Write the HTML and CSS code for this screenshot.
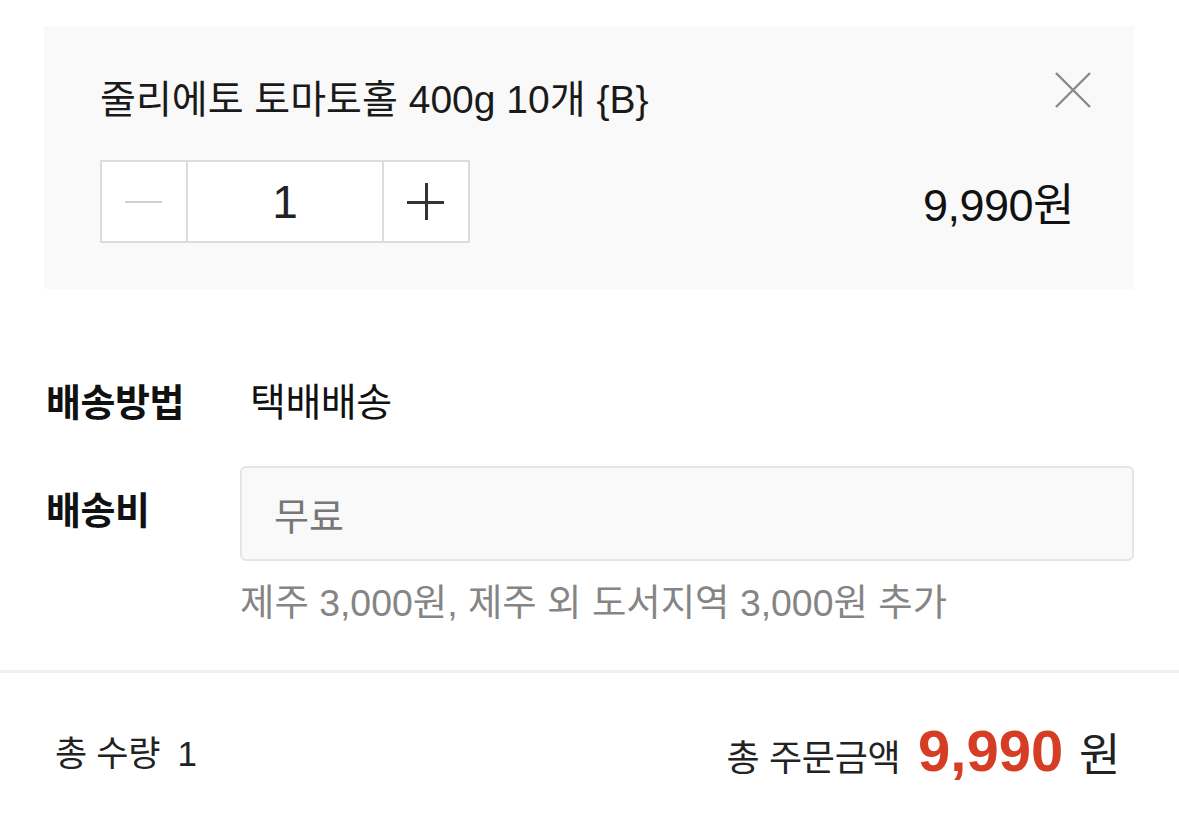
FILE: index.html
```html
<!DOCTYPE html>
<html lang="ko">
<head>
    <meta charset="UTF-8">
    <meta name="viewport" content="width=device-width, initial-scale=1.0">
    <title>주문 옵션</title>
    <link rel="stylesheet" href="styles.css">
</head>
<body>
    <!-- Selected option -->
    <div class="option-box">
        <div class="option-head">
            <p class="option-name">줄리에토 토마토홀 400g 10개 {B}</p>
            <button class="remove-btn" aria-label="삭제">
                <svg width="38" height="38" viewBox="0 0 38 38">
                    <path d="M2 2 L36 36 M36 2 L2 36" stroke="#8a8a8a" stroke-width="2.4" fill="none"/>
                </svg>
            </button>
        </div>
        <div class="option-row">
            <div class="stepper">
                <button class="step-btn minus" aria-label="빼기"><span class="bar-h"></span></button>
                <input class="qty" type="text" value="1">
                <button class="step-btn plus" aria-label="더하기"><span class="bar-h"></span><span class="bar-v"></span></button>
            </div>
            <div class="option-price">9,990원</div>
        </div>
    </div>

    <!-- Delivery -->
    <div class="delivery">
        <div class="field">
            <div class="field-label">배송방법</div>
            <div class="field-value">택배배송</div>
        </div>
        <div class="field fee">
            <div class="field-label">배송비</div>
            <div class="field-body">
                <div class="fee-box">무료</div>
                <p class="fee-note">제주 3,000원, 제주 외 도서지역 3,000원 추가</p>
            </div>
        </div>
    </div>

    <!-- Totals -->
    <div class="totals">
        <div class="total-qty">총 수량 <span class="num">1</span></div>
        <div class="total-price">총 주문금액 <strong>9,990</strong> <span class="won">원</span></div>
    </div>
</body>
</html>
```

FILE: styles.css
```css
body {
    font-family: "Liberation Sans", "Noto Sans CJK KR", sans-serif;
    margin: 0;
    padding: 0;
    background: #fff;
    color: #111;
}
.option-box {
    margin: 26px 45px 0 44px;
    height: 263px;
    box-sizing: border-box;
    padding: 48px 42px 0 56px;
    background: #f9f9f9;
}
.option-head {
    display: flex;
    justify-content: space-between;
    align-items: flex-start;
}
.option-name {
    margin: 0;
    font-size: 39px;
    line-height: 52px;
    color: #1a1a1a;
}
.remove-btn {
    background: none;
    border: none;
    padding: 0;
    margin-top: -3px;
    cursor: pointer;
    line-height: 0;
}
.option-row {
    display: flex;
    justify-content: space-between;
    align-items: center;
    margin-top: 34px;
    padding-right: 18px;
}
.stepper {
    display: flex;
    border: 2px solid #dcdcdc;
    height: 79px;
    background: #fff;
}
.step-btn {
    width: 86px;
    border: none;
    background: #fff;
    padding: 0;
    position: relative;
    cursor: pointer;
}
.step-btn.minus {
    border-right: 2px solid #dcdcdc;
}
.step-btn.plus {
    border-left: 2px solid #dcdcdc;
}
.bar-h, .bar-v {
    position: absolute;
    left: 50%;
    top: 50%;
    background: #333;
}
.bar-h {
    width: 37px;
    height: 3px;
    margin: -1px 0 0 -19px;
}
.bar-v {
    width: 3px;
    height: 37px;
    margin: -19px 0 0 -1px;
}
.minus .bar-h {
    background: #cfcfcf;
    height: 2px;
}
.qty {
    width: 194px;
    border: none;
    text-align: center;
    font-family: inherit;
    font-size: 46px;
    color: #222;
    padding: 0;
    outline: none;
}
.option-price {
    font-size: 45px;
    letter-spacing: -0.5px;
    color: #111;
}
.delivery {
    padding: 90px 45px 0 46px;
}
.field {
    display: flex;
    align-items: flex-start;
}
.field-label {
    width: 194px;
    flex-shrink: 0;
    font-size: 38px;
    font-weight: bold;
    line-height: 48px;
    letter-spacing: -0.5px;
}
.field-value {
    font-size: 39px;
    line-height: 48px;
    padding-left: 10px;
    letter-spacing: -0.5px;
}
.fee {
    margin-top: 39px;
}
.fee .field-label {
    margin-top: 21px;
}
.field-body {
    flex: 1;
}
.fee-box {
    height: 95px;
    box-sizing: border-box;
    border: 2px solid #e5e5e5;
    border-radius: 6px;
    background: #f9f9f9;
    padding-left: 32px;
    display: flex;
    align-items: center;
    font-size: 38px;
    color: #777;
}
.fee-note {
    margin: 19px 0 0;
    font-size: 37.4px;
    line-height: 46px;
    color: #858585;
}
.totals {
    margin-top: 44px;
    border-top: 3px solid #f0f0f0;
    display: flex;
    justify-content: space-between;
    align-items: center;
    padding: 0 59px 0 55px;
    height: 154px;
}
.total-qty {
    font-size: 35px;
    color: #222;
    letter-spacing: -0.3px;
}
.total-qty .num {
    margin-left: 8px;
}
.total-price {
    font-size: 36px;
    color: #222;
    letter-spacing: -0.3px;
}
.total-price strong {
    font-size: 58px;
    color: #d63d25;
    margin: 0 6px 0 8px;
    letter-spacing: 0;
}
.total-price .won {
    font-size: 45px;
}
```
